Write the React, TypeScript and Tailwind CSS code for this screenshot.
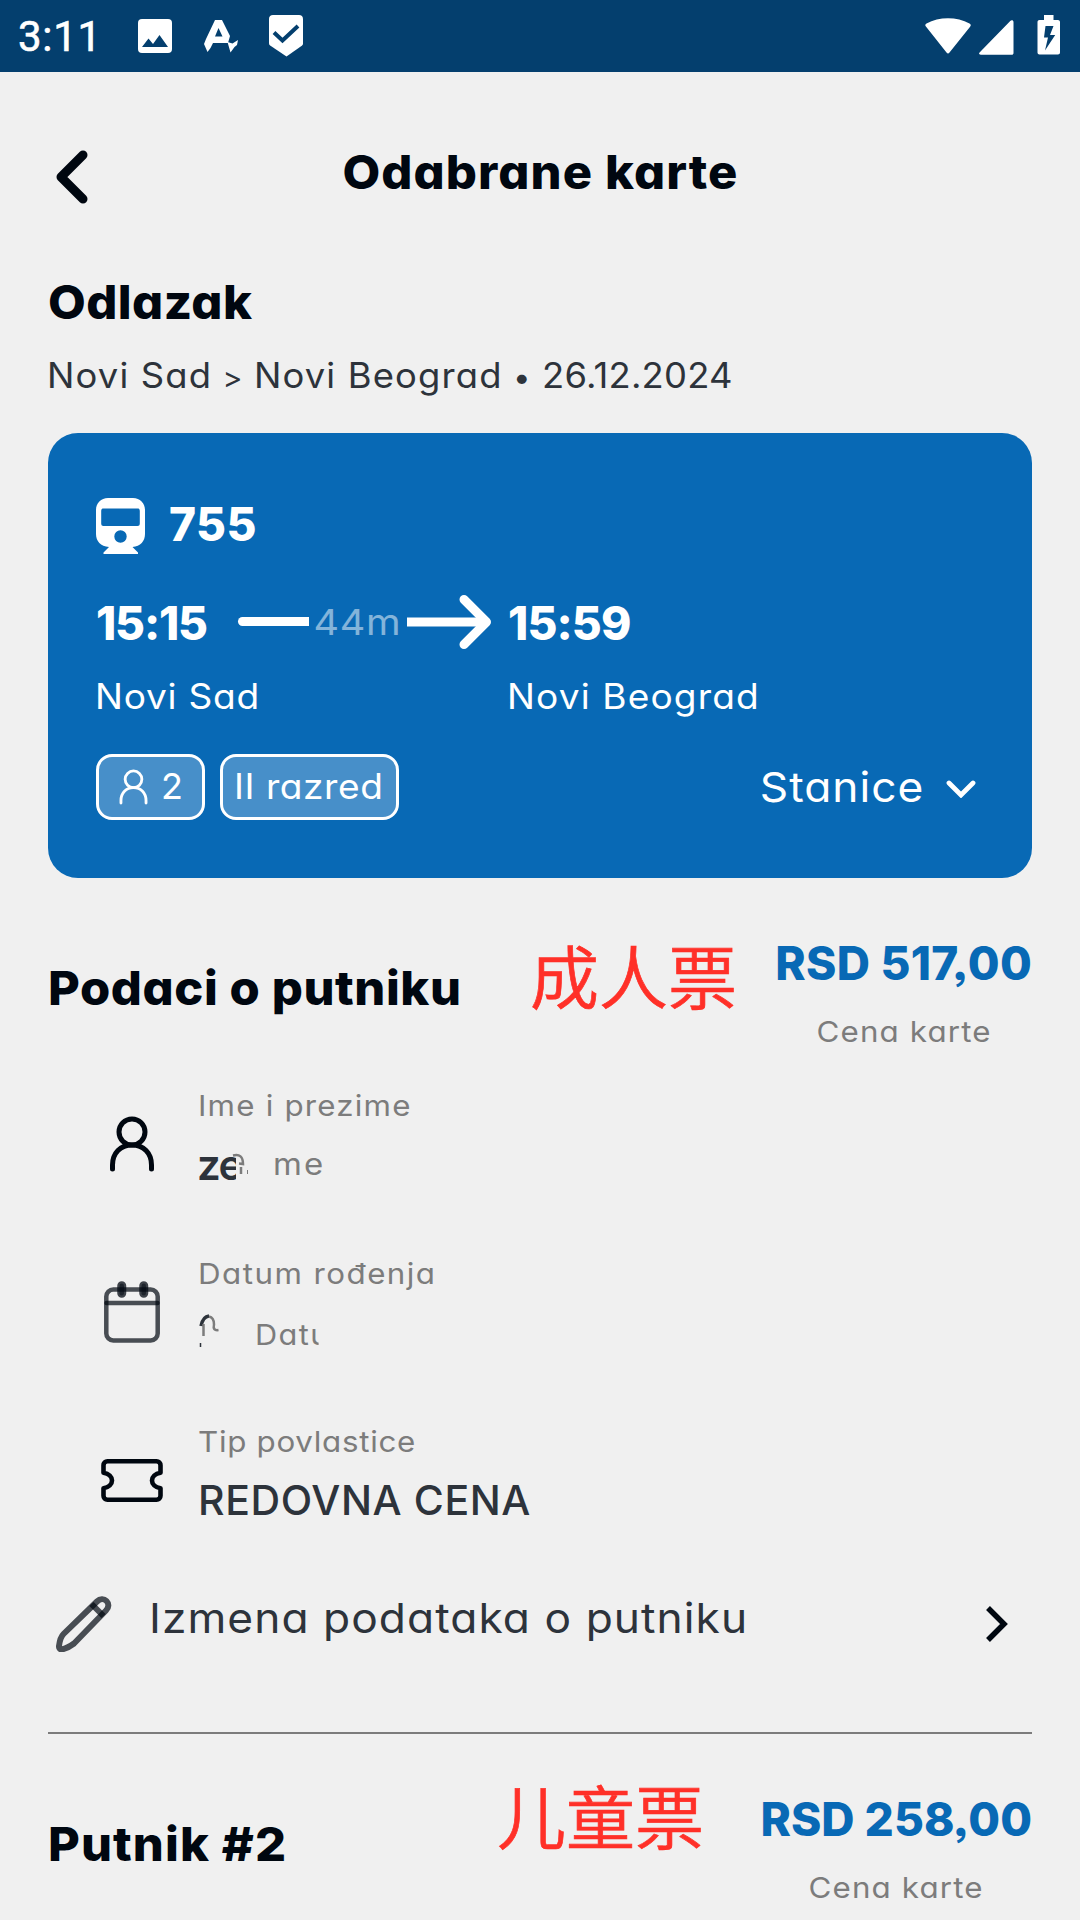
import type { ReactNode } from 'react';

function StatusBar() {
  return (
    <div className="flex h-[72px] shrink-0 items-center bg-[#043f6e] pl-[18px] pr-[20px] text-white">
      <span className="mt-[2px] w-[119px] font-[Roboto] text-[42px] leading-[60px] font-normal tracking-[0.700px] [-webkit-text-stroke:0.6px_white]">3:11</span>
      <svg className="h-9 w-9" viewBox="0 0 36 36" fill="none">
        <rect x="1" y="1" width="34" height="34" rx="4" fill="white" />
        <path d="M5 29l6.500-8.500 4.500 5.500 6.500-9 8.500 12z" fill="#043f6e" />
      </svg>
      <svg className="ml-[30px] h-9 w-9" viewBox="0 0 36 36" fill="none">
        <path fillRule="evenodd" d="M12 2h7l8 16-2 7H10l-2.500 5-3 4L1 26l2-5zM15.500 10L12 18.500h7.500z" fill="white" />
        <path d="M24.500 24l5 1.500L35 22l-1 5-2.500 2-4 5.500z" fill="white" />
      </svg>
      <svg className="ml-[30px] h-[42px] w-9" viewBox="0 0 36 42" fill="none">
        <path d="M4 0h26c2.500 0 4 1.500 4 4v24.500c0 1-.5 1.800-1.200 2.300L17.500 41.500 1.500 30.800C.5 30 0 29.500 0 28V4c0-2.500 1.500-4 4-4z" fill="white" />
        <path d="M5 17.500L13.500 25.500 29 11" stroke="#043f6e" strokeWidth="4" />
      </svg>
      <div className="ml-auto flex items-center">
        <svg className="-mt-px h-9 w-[46px]" viewBox="0 0 46 36" fill="white">
          <path d="M1.300 9C-.2 7.600 0 6.600 1.500 5.600 14-1.600 32-1.600 44.500 5.600c1.500 1 1.700 2 .4 3.400L24.500 34.500c-1 1.200-2 1.200-3 0z" />
        </svg>
        <svg className="ml-2 mt-[2px] h-[35px] w-[35px]" viewBox="0 0 35 35" fill="white">
          <path d="M31 1.200c1.500-1.500 3.500-1 3.500 1V33c0 1.200-.6 1.800-1.800 1.800H1.800c-1.800 0-2.300-1.300-1-2.600z" />
        </svg>
        <svg className="-mt-[2px] ml-[23px] h-10 w-[23px]" viewBox="0 0 23 40" fill="none">
          <path d="M7 0h9.500v5H21c1 0 2 .8 2 2v30.500c0 1-.8 2-2 2H2.500c-1.200 0-2-1-2-2V7c0-1.200.8-2 2-2H7z" fill="white" />
          <path d="M8.500 11h8l-3.500 9h5.200L8 35.500l3-13H7z" fill="#043f6e" />
        </svg>
      </div>
    </div>
  );
}

function PersonIcon({ className, strokeWidth }: { className: string; strokeWidth: number }) {
  return (
    <svg className={className} viewBox="0 0 44 56" fill="none" stroke="currentColor" strokeWidth={strokeWidth} strokeLinecap="round">
      <circle cx="22" cy="16" r="13" />
      <path d="M2.500 53V49C2.500 37 10.500 29 22 29S41.500 37 41.500 49V53" />
    </svg>
  );
}

function CalendarIcon() {
  return (
    <svg className="h-[62px] w-14" viewBox="0 0 56 62" fill="none" stroke="#000710" strokeWidth="4.500" strokeLinecap="round">
      <rect x="2.300" y="8.500" width="51.400" height="51" rx="7" strokeOpacity="0.7" />
      <path d="M2.500 22h51" strokeOpacity="0.7" />
      <rect x="15.500" y="2.500" width="4.500" height="12" rx="2.250" strokeOpacity="0.75" fill="#000710" fillOpacity="0.5" />
      <rect x="37.500" y="2.500" width="4.500" height="12" rx="2.250" strokeOpacity="0.75" fill="#000710" fillOpacity="0.5" />
    </svg>
  );
}

function TicketIcon() {
  return (
    <svg className="h-[43px] w-[62px]" viewBox="0 0 62 43" fill="none" stroke="#000710" strokeWidth="4.600" strokeLinejoin="round">
      <path d="M6.500 2.300h49c2.300 0 4 1.700 4 4v7.500c-5.500.9-8.500 4-8.500 7.700s3 6.800 8.500 7.700v7.500c0 2.300-1.700 4-4 4h-49c-2.300 0-4-1.700-4-4v-7.500c5.500-.9 8.500-4 8.500-7.700s-3-6.800-8.500-7.700V6.300c0-2.300 1.700-4 4-4z" />
    </svg>
  );
}

function TrainIcon() {
  return (
    <svg className="mt-1 h-14 w-[49px]" viewBox="0 0 49 56" fill="none">
      <path
        fillRule="evenodd"
        d="M12 0h25c7 0 12 5 12 12v24c0 7-4.500 12.500-12.500 13L42 54.500V56H7.500v-1.500L13 49C4.500 48.500 0 43 0 36V12C0 5 5 0 12 0zM7.500 10.500C6 10.500 5.200 11.300 5.200 13v12.500c0 1.700.8 2.500 2.300 2.500h34c1.500 0 2.300-.8 2.300-2.500V13c0-1.700-.8-2.500-2.300-2.500zM24.500 32.300a6.200 6.200 0 1 0 0 12.400 6.200 6.200 0 0 0 0-12.400z"
        fill="white"
      />
    </svg>
  );
}

function TripCard() {
  return (
    <section className="mt-[33px] h-[445px] rounded-[30px] bg-[#0869b5] px-12 pt-[61px] text-white">
      <div className="flex h-[60px] items-center">
        <TrainIcon />
        <span className="ml-6 text-[46px] leading-[60px] font-extrabold tracking-[0.500px]">755</span>
      </div>
      <div className="mt-[39px] flex h-[60px] items-center">
        <span className="w-[142px] text-[46px] leading-[60px] font-extrabold tracking-[-1.200px]">15:15</span>
        <div className="-mt-[3px] flex w-[253px] items-center">
          <div className="h-[9px] w-[71px] rounded-l-full bg-white" />
          <span className="w-[98px] origin-left scale-x-110 pl-[4px] text-[36px] leading-[50px] tracking-[0.600px] text-white/50">44m</span>
          <svg className="relative h-[54px] w-[84px]" viewBox="0 0 84 54" fill="none" stroke="white" strokeWidth="9">
            <path d="M0 27h78" />
            <path d="M57 4.500L79.500 27 57 49.500" strokeLinecap="round" strokeLinejoin="round" />
          </svg>
        </div>
        <span className="ml-[17px] text-[46px] leading-[60px] font-extrabold tracking-[-0.900px]">15:59</span>
      </div>
      <div className="mt-[18px] flex h-[50px] text-[35px] leading-[50px]">
        <span className="-ml-px w-[412px] origin-left scale-x-106 tracking-[0.700px]">Novi Sad</span>
        <span className="origin-left scale-x-106 tracking-[1.050px]">Novi Beograd</span>
      </div>
      <div className="mt-[33px] flex h-[66px] items-center">
        <div className="flex h-full w-[109px] items-center rounded-2xl border-[3px] border-white bg-[#478fc9] pl-5">
          <PersonIcon className="h-9 w-[29px]" strokeWidth={4.4} />
          <span className="-mt-[2px] ml-[13px] text-[36px] leading-[56px]">2</span>
        </div>
        <div className="ml-[15px] flex h-full w-[179px] items-center rounded-2xl border-[3px] border-white bg-[#478fc9] pl-[11px]">
          <span className="-mt-[2px] origin-left scale-x-106 text-[35px] leading-[58px] tracking-[0.500px]">II razred</span>
        </div>
        <div className="ml-auto mr-2 flex items-center">
          <span className="origin-right scale-x-108 text-[41px] leading-[60px] tracking-[0.900px]">Stanice</span>
          <svg className="ml-[22px] mt-1 h-[18px] w-[30px]" viewBox="0 0 30 18" fill="none" stroke="white" strokeWidth="4.800" strokeLinecap="round">
            <path d="M3 3l12 12L27 3" />
          </svg>
        </div>
      </div>
    </section>
  );
}

function FareHeader({ title, titleClass, note, noteClass, price, priceClass }: {
  title: string; titleClass: string; note: string; noteClass: string; price: string; priceClass: string;
}) {
  return (
    <div className="relative mt-[55px] flex h-[120px] justify-between">
      <h2 className={`mt-[25px] origin-left scale-x-104 text-[47px] leading-[60px] font-extrabold text-[#000710] ${titleClass}`}>{title}</h2>
      <span className={`absolute font-['Noto_Sans_CJK_SC'] text-[69px] leading-[80px] font-[350] text-[#ff3028] [-webkit-text-stroke:0.7px_#ff3028] ${noteClass}`}>{note}</span>
      <div className="flex flex-col items-center">
        <span className={`text-[46px] leading-[60px] font-extrabold text-[#0869b5] ${priceClass}`}>{price}</span>
        <span className="mt-[19px] scale-x-108 text-[29px] leading-10 tracking-[1.050px] text-[#7c7c7c]">Cena karte</span>
      </div>
    </div>
  );
}

function DetailRow({ icon, label, labelClass, children }: { icon: ReactNode; label: string; labelClass: string; children: ReactNode }) {
  return (
    <div className="flex h-[168px]">
      <div className="flex h-[152px] w-[150px] items-center justify-center pl-[18px] text-[#000710]">{icon}</div>
      <div className="flex flex-col items-start pt-[18px]">
        <span className={`origin-left scale-x-108 text-[29px] leading-10 text-[#7c7c7c] ${labelClass}`}>{label}</span>
        <div className="mt-[10px] flex h-14 items-center">{children}</div>
      </div>
    </div>
  );
}

export default function App() {
  return (
    <div className="h-[1920px] w-[1080px] overflow-hidden bg-[#f0f0f0] font-[Inter,sans-serif] [font-feature-settings:'cv11','ss03'] text-[#2d333b]">
      <StatusBar />
      <main className="flex flex-col px-12">
        <header className="relative flex h-[200px] items-center justify-center">
          <svg className="absolute left-2 top-[78px] h-[54px] w-8" viewBox="0 0 32 54" fill="none" stroke="#000710" strokeWidth="9" strokeLinecap="round" strokeLinejoin="round">
            <path d="M27 5L5 27l22 22" />
          </svg>
          <h1 className="scale-x-104 text-[47px] leading-[60px] font-extrabold tracking-[1.050px] text-[#000710]">Odabrane karte</h1>
        </header>
        <h2 className="origin-left scale-x-104 text-[47px] leading-[60px] font-extrabold tracking-[0.400px] text-[#000710]">Odlazak</h2>
        <p className="-ml-px mt-[18px] h-[50px] origin-left scale-x-104 text-[35px] leading-[50px] tracking-[1.100px] whitespace-nowrap">
          Novi Sad <span className="-ml-px mr-[-1px] text-[29px]">&gt;</span> Novi Beograd <span className="-mx-px text-[30px]">•</span> <span className="tracking-[0.200px]">26.12.2024</span>
        </p>

        <TripCard />

        <FareHeader title="Podaci o putniku" titleClass="tracking-[0.550px]" note="成人票" noteClass="left-[482px] top-[1px]" price="RSD 517,00" priceClass="tracking-[0.250px]" />

        <div className="mt-[15px]">
          <DetailRow icon={<PersonIcon className="h-14 w-11" strokeWidth={5} />} label="Ime i prezime" labelClass="tracking-[1.100px]">
            <span className="-ml-px mt-[2px] w-[39px] overflow-hidden text-[42px] leading-[56px] font-semibold tracking-[-1.500px]">ze</span>
            <svg className="-ml-2 h-[26px] w-6 -translate-y-px" viewBox="0 0 24 26" fill="none" stroke="#7c7c7c" strokeWidth="2.500">
              <path d="M5 5.500Q15 3 15 14l-4-.5M13 17v7" />
              <path d="M19.500 20v4" strokeWidth="1" />
            </svg>
            <span className="ml-[21px] origin-left scale-x-110 text-[30px] leading-[56px] tracking-[2px] text-[#7c7c7c]">me</span>
          </DetailRow>
          <DetailRow icon={<CalendarIcon />} label="Datum rođenja" labelClass="tracking-[1.350px]">
            <svg className="ml-[1px] h-[36px] w-[56px]" viewBox="0 0 56 36" fill="none">
              <path d="M2 12Q4 2.500 10 2" stroke="#2d333b" strokeWidth="3.500" />
              <path d="M10 2.500q5 1 5 8-1.500 6.500 4.500 5.500M4.500 10v12" stroke="#7c7c7c" strokeWidth="2.500" />
              <path d="M1.500 29v4" stroke="#2d333b" strokeWidth="1.500" />
            </svg>
            <span className="mt-[6px] w-[60px] origin-left scale-x-106 overflow-hidden text-[29px] leading-[56px] tracking-[1.300px] text-[#7c7c7c]">Datu</span>
          </DetailRow>
          <DetailRow icon={<TicketIcon />} label="Tip povlastice" labelClass="tracking-[0.650px]">
            <span className="text-[41px] leading-[56px] font-medium tracking-[0.600px]">REDOVNA CENA</span>
          </DetailRow>
        </div>

        <div className="mt-[2px] flex h-[100px] items-center pl-2 pr-6">
          <svg className="h-14 w-14" viewBox="0 0 56 56" fill="none" stroke="#000710" strokeOpacity="0.7" strokeWidth="6" strokeLinejoin="round">
            <path d="M3 50C3.500 46 4.500 41 7.500 38L41 5.500c3-3 7-3 9.500-.5s2.500 6.500-.5 9.500L18 47.500c-4 3-7 5-12.500 6-1.500 0-2.700-1.500-2.500-3.500z" />
            <path d="M35.500 8l12 12" />
          </svg>
          <span className="-mt-3 ml-[37px] origin-left scale-x-108 text-[41px] leading-[60px] tracking-[0.980px]">Izmena podataka o putniku</span>
          <svg className="ml-auto h-9 w-[22px]" viewBox="0 0 22 36" fill="none" stroke="#000710" strokeWidth="5.500">
            <path d="M2 2l16 16L2 34" />
          </svg>
        </div>
        <hr className="mt-[58px] h-[2px] border-0 bg-[#7c7c7c]" />

        <FareHeader title="Putnik #2" titleClass="tracking-[1.050px]" note="儿童票" noteClass="left-[449px] -top-[15px]" price="RSD 258,00" priceClass="tracking-[0px]" />
      </main>
    </div>
  );
}
